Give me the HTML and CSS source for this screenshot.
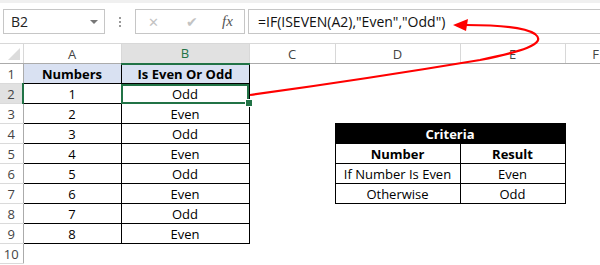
FILE: index.html
```html
<!DOCTYPE html>
<html lang="en">
<head>
  <meta charset="UTF-8" />
  <title>ISEVEN example</title>
  <link rel="stylesheet" href="styles.css">
</head>
<body>

<div class="toolbar">
  <div class="namebox">
    <span>B2</span>
    <span class="drop"></span>
  </div>
  <div class="dots"><i></i><i></i><i></i></div>
  <div class="fxbox">
    <span class="cancel">&#x2715;</span>
    <span class="enter">&#x2714;</span>
    <span class="fx">fx</span>
  </div>
  <div class="formula">=IF(ISEVEN(A2),"Even","Odd")</div>
</div>

<table class="sheet">
  <colgroup>
    <col class="c-hdr"><col class="c-a"><col class="c-b"><col class="c-c"><col class="c-d"><col class="c-e"><col class="c-f">
  </colgroup>
  <tr class="colhdr">
    <th class="corner"><span class="tri"></span></th>
    <th>A</th><th class="sel">B</th><th>C</th><th>D</th><th>E</th><th class="last">F</th>
  </tr>
  <tr>
    <th class="rh">1</th>
    <td class="bd head">Numbers</td><td class="bd head">Is Even Or Odd</td><td></td><td></td><td></td><td></td>
  </tr>
  <tr>
    <th class="rh sel">2</th>
    <td class="bd">1</td><td class="bd active">Odd<span class="handle"></span></td><td></td><td></td><td></td><td></td>
  </tr>
  <tr>
    <th class="rh">3</th>
    <td class="bd">2</td><td class="bd">Even</td><td></td><td></td><td></td><td></td>
  </tr>
  <tr>
    <th class="rh">4</th>
    <td class="bd">3</td><td class="bd">Odd</td><td></td><td class="bd black" colspan="2">Criteria</td><td></td>
  </tr>
  <tr>
    <th class="rh">5</th>
    <td class="bd">4</td><td class="bd">Even</td><td></td><td class="bd crit strong">Number</td><td class="bd crit strong">Result</td><td></td>
  </tr>
  <tr>
    <th class="rh">6</th>
    <td class="bd">5</td><td class="bd">Odd</td><td></td><td class="bd crit">If Number Is Even</td><td class="bd crit">Even</td><td></td>
  </tr>
  <tr>
    <th class="rh">7</th>
    <td class="bd">6</td><td class="bd">Even</td><td></td><td class="bd crit">Otherwise</td><td class="bd crit">Odd</td><td></td>
  </tr>
  <tr>
    <th class="rh">8</th>
    <td class="bd">7</td><td class="bd">Odd</td><td></td><td></td><td></td><td></td>
  </tr>
  <tr>
    <th class="rh">9</th>
    <td class="bd">8</td><td class="bd">Even</td><td></td><td></td><td></td><td></td>
  </tr>
  <tr>
    <th class="rh">10</th>
    <td></td><td></td><td></td><td></td><td></td><td></td>
  </tr>
</table>

<svg class="arrow" width="600" height="265" viewBox="0 0 600 265">
  <path d="M250,95 C330,84 420,70 480,60 C520,52 548,44 535,34 C525,27 495,25 466,25" fill="none" stroke="#f00" stroke-width="2.2"/>
  <polygon points="453,25 468,19 466,31" fill="#f00"/>
</svg>

</body>
</html>
```

FILE: styles.css
```css
body {
  margin: 0;
  background: #fff;
  font-family: "Open Sans", "Noto Sans", sans-serif;
  position: relative;
  width: 600px;
  height: 265px;
  overflow: hidden;
}

/* formula bar */
.toolbar {
  height: 43px;
  border-top: 3px solid #f0f0f0;
  box-sizing: border-box;
  display: flex;
  align-items: flex-start;
  padding: 6px 0 0 3px;
}
.namebox {
  width: 102px;
  height: 25px;
  border: 1px solid #c6c6c6;
  box-sizing: border-box;
  display: flex;
  align-items: center;
  justify-content: space-between;
  padding: 0 6px 0 7px;
  font-size: 14px;
  color: #222;
}
.drop {
  width: 0;
  height: 0;
  border-left: 4px solid transparent;
  border-right: 4px solid transparent;
  border-top: 4px solid #777;
}
.dots {
  width: 30px;
  height: 25px;
  display: flex;
  flex-direction: column;
  align-items: center;
  justify-content: center;
  gap: 2px;
}
.dots i {
  width: 2px;
  height: 2px;
  background: #9a9a9a;
}
.fxbox {
  width: 110px;
  height: 25px;
  border: 1px solid #c6c6c6;
  box-sizing: border-box;
  display: flex;
  align-items: center;
  padding: 0 0 0 12px;
  color: #c3c3c3;
  font-size: 14px;
}
.cancel { width: 38px; font-size: 13px; }
.enter { width: 36px; font-size: 14px; }
.fx {
  font-family: "Liberation Serif", serif;
  font-style: italic;
  font-size: 15px;
  color: #555;
}
.formula {
  margin-left: 3px;
  flex: 1;
  height: 25px;
  border: 1px solid #c6c6c6;
  border-right: none;
  box-sizing: border-box;
  padding: 1px 0 0 9px;
  font-size: 14px;
  color: #111;
  line-height: 22px;
  white-space: nowrap;
}

/* sheet */
.sheet {
  border-collapse: collapse;
  table-layout: fixed;
  width: 600px;
  font-size: 13px;
  color: #000;
}
.c-hdr { width: 23px; }
.c-a { width: 98px; }
.c-b { width: 128px; }
.c-c { width: 86px; }
.c-d { width: 125px; }
.c-e { width: 105px; }
.c-f { width: 35px; }
.sheet tr { height: 20px; }
.sheet td, .sheet th {
  padding: 0;
  text-align: center;
  white-space: nowrap;
  overflow: visible;
}
.colhdr { height: 21px; }
.colhdr th {
  font-weight: normal;
  color: #444;
  font-size: 13px;
  border-right: 1px solid #d8d8d8;
  border-bottom: 1px solid #ababab;
  border-top: 1px solid #d8d8d8;
}
.colhdr th.last {
  text-align: right;
  padding-right: 1px;
  border-right: none;
}
.colhdr th.sel {
  background: #e1e1e1;
  color: #217346;
  border-bottom: 2px solid #217346;
}
.corner { position: relative; }
.tri {
  position: absolute;
  right: 3px;
  bottom: 3px;
  width: 0;
  height: 0;
  border-left: 12px solid transparent;
  border-bottom: 12px solid #dcdcdc;
}
.rh {
  font-weight: normal;
  color: #444;
  font-size: 13px;
  border-right: 1px solid #ababab;
  border-bottom: 1px solid #dadada;
}
.rh.sel {
  background: #e1e1e1;
  border-right: 2px solid #217346;
}
.bd { border: 1px solid #000; }
.head {
  background: #d9e1f2;
  font-weight: bold;
}
.active {
  position: relative;
  outline: 2px solid #217346;
  outline-offset: -2px;
}
.handle {
  position: absolute;
  right: -4px;
  bottom: -4px;
  width: 6px;
  height: 6px;
  background: #217346;
  border: 1px solid #fff;
}
.black {
  background: #000;
  color: #fff;
  font-weight: bold;
}
.crit { font-size: 13px; }
.strong { font-weight: bold; }

.arrow {
  position: absolute;
  left: 0;
  top: 0;
  pointer-events: none;
}
```
